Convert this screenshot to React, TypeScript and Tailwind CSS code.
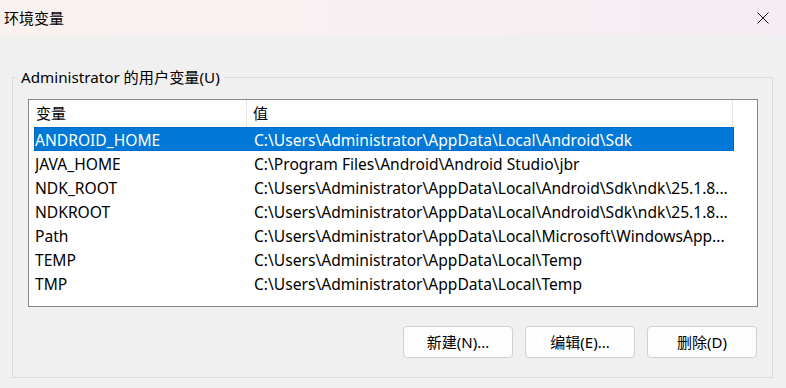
const FONT = { fontFamily: '"Segoe UI", "Noto Sans", "Noto Sans CJK SC", sans-serif' };

const ROWS = [
  ["ANDROID_HOME", "C:\\Users\\Administrator\\AppData\\Local\\Android\\Sdk"],
  ["JAVA_HOME", "C:\\Program Files\\Android\\Android Studio\\jbr"],
  ["NDK_ROOT", "C:\\Users\\Administrator\\AppData\\Local\\Android\\Sdk\\ndk\\25.1.8..."],
  ["NDKROOT", "C:\\Users\\Administrator\\AppData\\Local\\Android\\Sdk\\ndk\\25.1.8..."],
  ["Path", "C:\\Users\\Administrator\\AppData\\Local\\Microsoft\\WindowsApp..."],
  ["TEMP", "C:\\Users\\Administrator\\AppData\\Local\\Temp"],
  ["TMP", "C:\\Users\\Administrator\\AppData\\Local\\Temp"],
];

const BUTTONS = ["新建(N)...", "编辑(E)...", "删除(D)"];

export default function App() {
  const selected = 0;

  return (
    <div
      className="w-[786px] h-[388px] bg-[#f0f0f0] text-black overflow-hidden flex flex-col"
      style={FONT}
    >
      {/* title bar */}
      <div className="h-[36px] shrink-0 flex items-center justify-between bg-gradient-to-r from-[#faf2f0] via-[#f8eff2] to-[#f6edf4]">
        <span className="pl-[4px] text-[15px] leading-none">环境变量</span>
        <div className="w-[46px] h-[36px] flex items-center justify-center">
          <svg width="12" height="12" viewBox="0 0 12 12">
            <path d="M0.5 0.5 L11.5 11.5 M11.5 0.5 L0.5 11.5" stroke="#1a1a1a" strokeWidth="1" fill="none" />
          </svg>
        </div>
      </div>

      <fieldset className="mt-[31px] ml-[12px] w-[761px] border border-[#dcdcdc] pl-[15px] pr-[14px] pb-[19px]">
        <legend className="-ml-[11px] px-[4px] text-[15.2px] leading-[20px]">
          Administrator 的用户变量(U)
        </legend>

        {/* list view */}
        <div className="mt-[12px] h-[208px] border border-[#828790] bg-white text-[15.6px]">
          <div className="flex h-[27px] items-stretch text-[15px]">
            <div className="w-[218px] border-r border-[#e5e5e5] pl-[7px] flex items-center">变量</div>
            <div className="w-[486px] border-r border-[#e5e5e5] pl-[6px] flex items-center">值</div>
          </div>
          {ROWS.map(([name, value], i) => (
            <div
              key={name}
              className={
                i === selected
                  ? "ml-[5px] w-[700px] h-[24px] pt-[4px] flex items-center bg-[#0078d7] text-white border border-dotted border-[#1d4f7d] whitespace-nowrap"
                  : "ml-[5px] w-[700px] h-[24px] pt-[4px] flex items-center border border-transparent whitespace-nowrap"
              }
            >
              <div className="w-[212px] overflow-hidden">{name}</div>
              <div className="flex-1 pl-[7px] overflow-hidden">{value}</div>
            </div>
          ))}
        </div>

        <div className="mt-[19px] flex justify-end gap-[12px] pr-[1px]">
          {BUTTONS.map((b) => (
            <button
              key={b}
              className="w-[110px] h-[32px] rounded-[4px] border border-[#d0d0d0] bg-[#fdfdfd] text-[15px] flex items-center justify-center"
            >
              {b}
            </button>
          ))}
        </div>
      </fieldset>
    </div>
  );
}
